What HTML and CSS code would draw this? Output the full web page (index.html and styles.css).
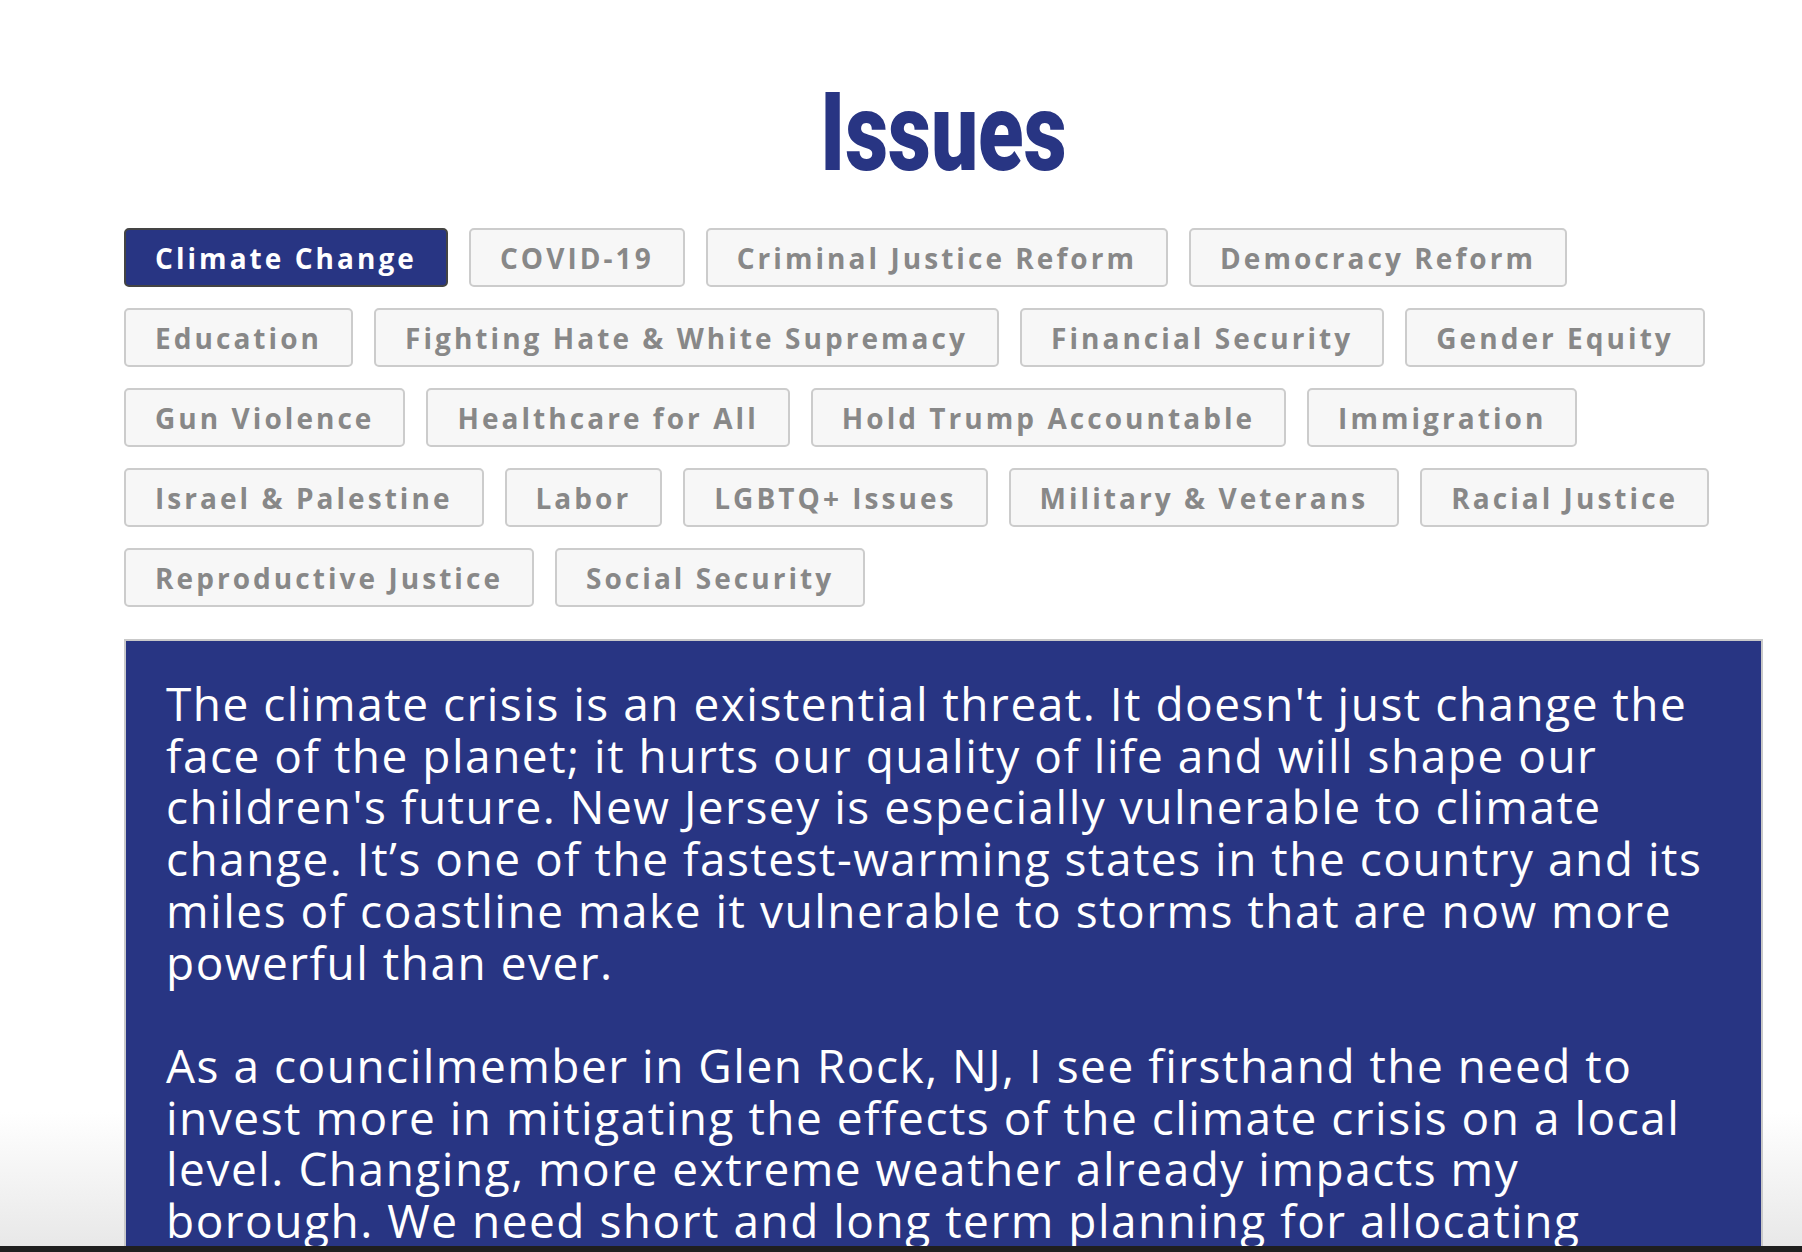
FILE: index.html
```html
<!DOCTYPE html>
<html lang="en">
<head>
<meta charset="utf-8">
<title>Issues</title>
<link rel="stylesheet" href="styles.css">
</head>
<body>
<main class="issues">
  <h1 class="issues-title"><span class="issues-title-text">Issues</span></h1>
  <nav class="tabs">
    <button class="tab tab-active">Climate Change</button>
    <button class="tab">COVID-19</button>
    <button class="tab">Criminal Justice Reform</button>
    <button class="tab">Democracy Reform</button>
    <button class="tab">Education</button>
    <button class="tab">Fighting Hate &amp; White Supremacy</button>
    <button class="tab">Financial Security</button>
    <button class="tab">Gender Equity</button>
    <button class="tab">Gun Violence</button>
    <button class="tab">Healthcare for All</button>
    <button class="tab">Hold Trump Accountable</button>
    <button class="tab">Immigration</button>
    <button class="tab">Israel &amp; Palestine</button>
    <button class="tab">Labor</button>
    <button class="tab">LGBTQ+ Issues</button>
    <button class="tab">Military &amp; Veterans</button>
    <button class="tab">Racial Justice</button>
    <button class="tab">Reproductive Justice</button>
    <button class="tab">Social Security</button>
  </nav>
  <section class="panel">
    <p>The climate crisis is an existential threat. It doesn't just change the face of the planet; it hurts our quality of life and will shape our children's future. New Jersey is especially vulnerable to climate change. It’s one of the fastest-warming states in the country and its miles of coastline make it vulnerable to storms that are now more powerful than ever.</p>
    <p>As a councilmember in Glen Rock, NJ, I see firsthand the need to invest more in mitigating the effects of the climate crisis on a local level. Changing, more extreme weather already impacts my borough. We need short and long term planning for allocating resources.</p>
  </section>
</main>
<div class="screen-edge"></div>
</body>
</html>
```
FILE: styles.css
```css
html {
  background: linear-gradient(to bottom, #ffffff 0, #ffffff calc(100% - 140px), #e8e8e8 calc(100% - 6px), #e8e8e8 100%) fixed;
}
body {
  margin: 0;
  font-family: "Open Sans", "Liberation Sans", sans-serif;
}
.issues {
  padding: 78px 39px 0 124px;
}
.issues-title {
  margin: 0 0 40px;
  text-align: center;
  font-family: Roboto, "Liberation Sans", sans-serif;
  font-weight: 900;
  font-size: 110px;
  line-height: 110px;
  color: #283583;
}
.issues-title-text {
  display: inline-block;
  transform: scaleX(0.76);
}
.tabs {
  display: flex;
  flex-wrap: wrap;
  gap: 21px 21px;
}
.tab {
  box-sizing: border-box;
  height: 59px;
  padding: 0 29px;
  border: 2px solid #cccccc;
  border-radius: 5px;
  background: #f7f7f7;
  color: #888888;
  font-family: "Open Sans", "Liberation Sans", sans-serif;
  font-weight: 700;
  font-size: 28px;
  letter-spacing: 3.05px;
  line-height: 1;
  white-space: nowrap;
}
.tab-active {
  background: #283583;
  border-color: #444444;
  color: #ffffff;
}
.panel {
  margin-top: 32px;
  border: 2px solid #c9c9c9;
  border-bottom: 0;
  background: #283583;
  padding: 37px 40px 60px 40px;
  color: #ffffff;
  font-size: 46px;
  line-height: 51.7px;
  letter-spacing: 1.5px;
}
.panel p {
  margin: 0 0 51.7px;
}
.screen-edge {
  position: fixed;
  left: 0;
  right: 0;
  bottom: 0;
  height: 6px;
  background: #1f1f1f;
}
```
